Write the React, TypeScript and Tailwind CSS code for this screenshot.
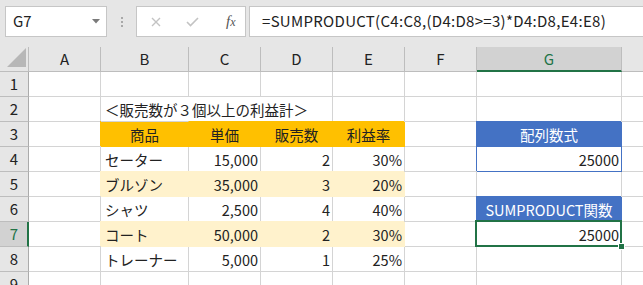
import clsx from "clsx";

type Cell = {
  v?: string;
  align?: "l" | "r" | "c";
  fill?: "orange" | "cream" | "blue";
  selected?: boolean;
  boxed?: boolean;
  noRight?: boolean;
};

const columns = ["A", "B", "C", "D", "E", "F", "G", ""];

const table = (a: string, b: string, c: string, d: string, cream: boolean): Cell[] => {
  const fill = cream ? "cream" : undefined;
  return [
    {},
    { v: a, align: "l", fill },
    { v: b, align: "r", fill },
    { v: c, align: "r", fill },
    { v: d, align: "r", fill },
  ];
};

const rows: Cell[][] = [
  [],
  [{}, { v: "＜販売数が３個以上の利益計＞", align: "l", noRight: true }, { noRight: true }],
  [
    {},
    { v: "商品", align: "c", fill: "orange" },
    { v: "単価", align: "c", fill: "orange" },
    { v: "販売数", align: "c", fill: "orange" },
    { v: "利益率", align: "c", fill: "orange" },
    {},
    { v: "配列数式", align: "c", fill: "blue" },
  ],
  [...table("セーター", "15,000", "2", "30%", false), {}, { v: "25000", align: "r", boxed: true }],
  table("ブルゾン", "35,000", "3", "20%", true),
  [...table("シャツ", "2,500", "4", "40%", false), {}, { v: "SUMPRODUCT関数", align: "c", fill: "blue" }],
  [...table("コート", "50,000", "2", "30%", true), {}, { v: "25000", align: "r", selected: true }],
  table("トレーナー", "5,000", "1", "25%", false),
  [],
];

const fills = {
  orange: "bg-[#ffc000] border-[#ffc000] shadow-[-1px_-1px_0_0_#ffc000] text-[#222]",
  cream: "bg-[#fff2cc] border-[#fff2cc] shadow-[-1px_-1px_0_0_#fff2cc] text-[#222]",
  blue: "bg-[#4472c4] border-[#4472c4] shadow-[-1px_-1px_0_0_#4472c4] text-white",
};

function cellLook(cell: Cell) {
  if (cell.fill) return fills[cell.fill];
  if (cell.boxed) return "border-[#4472c4] shadow-[-1px_-1px_0_0_#4472c4] text-[#222]";
  if (cell.noRight) return "border-b-[#d4d4d4] border-r-transparent text-[#222]";
  return "border-[#d4d4d4] text-[#222]";
}

function GridCell({ cell, last }: { cell: Cell; last: boolean }) {
  return (
    <div
      className={clsx(
        "relative flex items-center whitespace-nowrap border-b px-[4px] pt-[1px] text-[14.5px]",
        last ? "border-r-0" : "border-r",
        cellLook(cell),
        cell.align === "r" && "justify-end pr-[2px]",
        cell.align === "c" && "justify-center",
        cell.v && cell.noRight && "z-10",
      )}
    >
      {cell.v && <span>{cell.v}</span>}
      {cell.selected && (
        <>
          <div className="absolute -bottom-[1px] -left-[2px] -right-[1px] -top-[2px] border-2 border-[#217346]" />
          <div className="absolute -bottom-[4px] -right-[4px] z-10 h-[7px] w-[7px] border border-white bg-[#217346]" />
        </>
      )}
    </div>
  );
}

export default function App() {
  return (
    <div className="h-[285px] w-[643px] overflow-hidden bg-white font-['Noto_Sans_CJK_JP','Noto_Sans',sans-serif]">
      {/* formula bar */}
      <div className="flex h-[47px] items-start bg-[#e6e6e6] pt-[6px]">
        <div className="ml-[5px] flex h-[31px] w-[102px] items-center justify-between border border-[#c6c6c6] bg-white pl-[7px] pr-[6px] text-[15px] text-[#222]">
          <span>G7</span>
          <svg width="8" height="5" viewBox="0 0 8 5">
            <path d="M0 0H8L4 4.5Z" fill="#7a7a7a" />
          </svg>
        </div>
        <div className="ml-[14px] mt-[11px] flex flex-col gap-[2px]">
          <div className="h-[2px] w-[2px] bg-[#a8a8a8]" />
          <div className="h-[2px] w-[2px] bg-[#a8a8a8]" />
          <div className="h-[2px] w-[2px] bg-[#a8a8a8]" />
        </div>
        <div className="ml-[13px] flex h-[31px] w-[110px] items-center border border-[#c6c6c6] bg-white">
          <svg className="ml-[14px]" width="10" height="10" viewBox="0 0 10 10">
            <path d="M1 1L9 9M9 1L1 9" stroke="#c3c3c3" strokeWidth="1.4" />
          </svg>
          <svg className="ml-[25px]" width="13" height="10" viewBox="0 0 13 10">
            <path d="M1 5L4.5 8.5L12 1" stroke="#c3c3c3" strokeWidth="1.6" fill="none" />
          </svg>
          <span className="ml-[27px] font-['Liberation_Serif',serif] text-[15px] italic text-[#555]">
            f<span className="text-[12px]">x</span>
          </span>
        </div>
        <div className="ml-[3px] -mr-[2px] flex h-[31px] flex-1 items-center border border-[#c6c6c6] bg-white pl-[12px] text-[15px] tracking-[0.3px] text-[#222]">
          =SUMPRODUCT(C4:C8,(D4:D8&gt;=3)*D4:D8,E4:E8)
        </div>
      </div>

      {/* sheet */}
      <div className="grid grid-cols-[29px_72px_88px_72px_72px_72px_72px_145px_1fr] grid-rows-[25px_repeat(9,25px)]">
        <div className="relative border-b border-r border-[#bdbdbd] bg-[#e6e6e6]">
          <svg className="absolute bottom-[4px] right-[2px]" width="19" height="19" viewBox="0 0 19 19">
            <path d="M19 0V19H0Z" fill="#b7b7b7" />
          </svg>
        </div>
        {columns.map((c, i) => (
          <div
            key={i}
            className={clsx(
              "flex items-center justify-center text-[15px]",
              i === columns.length - 1 ? "border-r-0" : "border-r border-r-[#bdbdbd]",
              c === "G"
                ? "border-b-2 border-b-[#217346] bg-[#d2d2d2] pt-[2px] text-[#217346]"
                : "border-b border-b-[#bdbdbd] bg-[#e6e6e6] text-[#222]",
            )}
          >
            {c}
          </div>
        ))}
        {rows.map((row, r) => (
          <div key={r} className="contents">
            <div
              className={clsx(
                "flex items-center justify-center border-b border-b-[#bdbdbd] text-[15px]",
                r === 6
                  ? "border-r-2 border-r-[#217346] bg-[#d2d2d2] pl-[1px] text-[#217346]"
                  : "border-r border-r-[#ababab] bg-[#e6e6e6] text-[#222]",
              )}
            >
              {r + 1}
            </div>
            {columns.map((_, c) => (
              <GridCell key={c} cell={row[c] ?? {}} last={c === columns.length - 1} />
            ))}
          </div>
        ))}
      </div>
    </div>
  );
}
